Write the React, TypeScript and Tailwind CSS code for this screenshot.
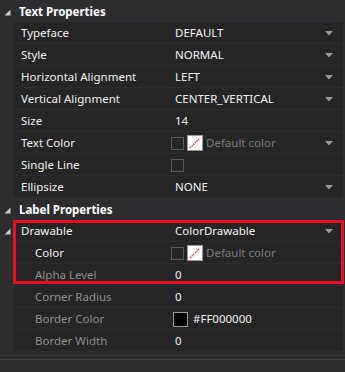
import React from "react";

type Row = {
  name: string;
  kind: "select" | "text" | "color" | "check" | "swatch";
  value?: string;
  indent?: boolean;
  dim?: boolean;
  expander?: boolean;
  noArrow?: boolean;
};

const textRows: Row[] = [
  { name: "Typeface", kind: "select", value: "DEFAULT" },
  { name: "Style", kind: "select", value: "NORMAL" },
  { name: "Horizontal Alignment", kind: "select", value: "LEFT" },
  { name: "Vertical Alignment", kind: "select", value: "CENTER_VERTICAL" },
  { name: "Size", kind: "text", value: "14" },
  { name: "Text Color", kind: "color" },
  { name: "Single Line", kind: "check" },
  { name: "Ellipsize", kind: "select", value: "NONE" },
];

const labelRows: Row[] = [
  { name: "Drawable", kind: "select", value: "ColorDrawable", expander: true },
  { name: "Color", kind: "color", indent: true, noArrow: true },
  { name: "Alpha Level", kind: "text", value: "0", indent: true, dim: true },
  { name: "Corner Radius", kind: "text", value: "0", indent: true, dim: true },
  { name: "Border Color", kind: "swatch", value: "#FF000000", indent: true, dim: true },
  { name: "Border Width", kind: "text", value: "0", indent: true, dim: true },
];

const Expander = () => (
  <svg width="7" height="7" viewBox="0 0 7 7" className="shrink-0">
    <polygon points="6.5,0.5 6.5,6.5 0.5,6.5" fill="#c8c8c8" />
  </svg>
);

const Arrow = () => (
  <svg width="8" height="5" viewBox="0 0 8 5" className="shrink-0">
    <polygon points="0,0 8,0 4,4.5" fill="#9a9a9a" />
  </svg>
);

const CheckBox = () => (
  <div className="w-[13px] h-[13px] border border-[#5a5a5a] bg-[#252526] shrink-0" />
);

const NoColor = () => (
  <svg width="16" height="16" viewBox="0 0 16 16" className="shrink-0">
    <rect x="0.5" y="0.5" width="15" height="15" fill="#ffffff" stroke="#9a9a9a" />
    <line x1="3" y1="13" x2="13" y2="3" stroke="#e0202a" strokeWidth="1.2" strokeDasharray="1.5 0.8" />
  </svg>
);

const Value = ({ row }: { row: Row }) => {
  if (row.kind === "select")
    return (
      <div className="flex items-center flex-1 pl-[5px] pr-[10px]">
        <span className="flex-1 text-[#f1f1f1]">{row.value}</span>
        <Arrow />
      </div>
    );
  if (row.kind === "text")
    return <span className="pl-[5px] text-[#f1f1f1]">{row.value}</span>;
  if (row.kind === "check")
    return (
      <div className="pl-[1px]">
        <CheckBox />
      </div>
    );
  if (row.kind === "swatch")
    return (
      <div className="flex items-center gap-[5px] pl-[3px]">
        <div className="w-[15px] h-[15px] bg-black border border-[#9a9a9a]" />
        <span className="text-[#f1f1f1]">{row.value}</span>
      </div>
    );
  return (
    <div className="flex items-center flex-1 pl-[1px] pr-[10px]">
      <CheckBox />
      <div className="ml-[3px]">
        <NoColor />
      </div>
      <span className="ml-[3px] flex-1 text-[#7c7c7c]">Default color</span>
      {!row.noArrow && <Arrow />}
    </div>
  );
};

const PropRow = ({ row }: { row: Row }) => (
  <div className="flex h-[22px]">
    <div className="w-[14px] flex items-center justify-center bg-[#2d2d30] pl-[1px]">
      {row.expander && <Expander />}
    </div>
    <div className="flex flex-1 bg-[#252526] border-b border-[#2d2d30] mr-[2px] pt-[1px]">
      <div
        className={
          "w-[156px] flex items-center " +
          (row.indent ? "pl-[21px] " : "pl-[7px] ") +
          (row.dim ? "text-[#8f8f8f]" : "text-[#f1f1f1]")
        }
      >
        {row.name}
      </div>
      <div className="flex flex-1 items-center">
        <Value row={row} />
      </div>
    </div>
  </div>
);

const Header = ({ title }: { title: string }) => (
  <div className="flex items-center h-[22px] bg-[#2d2d30] pt-[2px]">
    <div className="w-[14px] flex items-center justify-center pl-[1px]">
      <Expander />
    </div>
    <span className="pl-[5px] font-bold text-white">{title}</span>
  </div>
);

export default function App() {
  return (
    <div
      className="w-[345px] h-[372px] bg-[#2d2d30] text-[11.5px] overflow-hidden flex flex-col"
      style={{ fontFamily: '"Noto Sans", "Open Sans", sans-serif' }}
    >
      <div className="relative">
        {/* ---------- Text Properties ---------- */}
        <Header title="Text Properties" />
        {textRows.map((r) => (
          <PropRow key={r.name} row={r} />
        ))}

        {/* ---------- Label Properties ---------- */}
        <Header title="Label Properties" />
        {labelRows.map((r) => (
          <PropRow key={r.name} row={r} />
        ))}

        {/* highlight box */}
        <div className="absolute left-[13px] top-[220px] w-[331px] h-[64px] border-[3px] border-[#e81123] pointer-events-none" />
      </div>

      {/* bottom */}
      <div className="mt-[3px] h-[1px] bg-[#3c3c3f]" />
      <div className="h-[3px] bg-[#2a2a2c]" />
      <div className="h-[1px] bg-[#46464a]" />
      <div className="flex-1 bg-[#2d2d30]" />
    </div>
  );
}
